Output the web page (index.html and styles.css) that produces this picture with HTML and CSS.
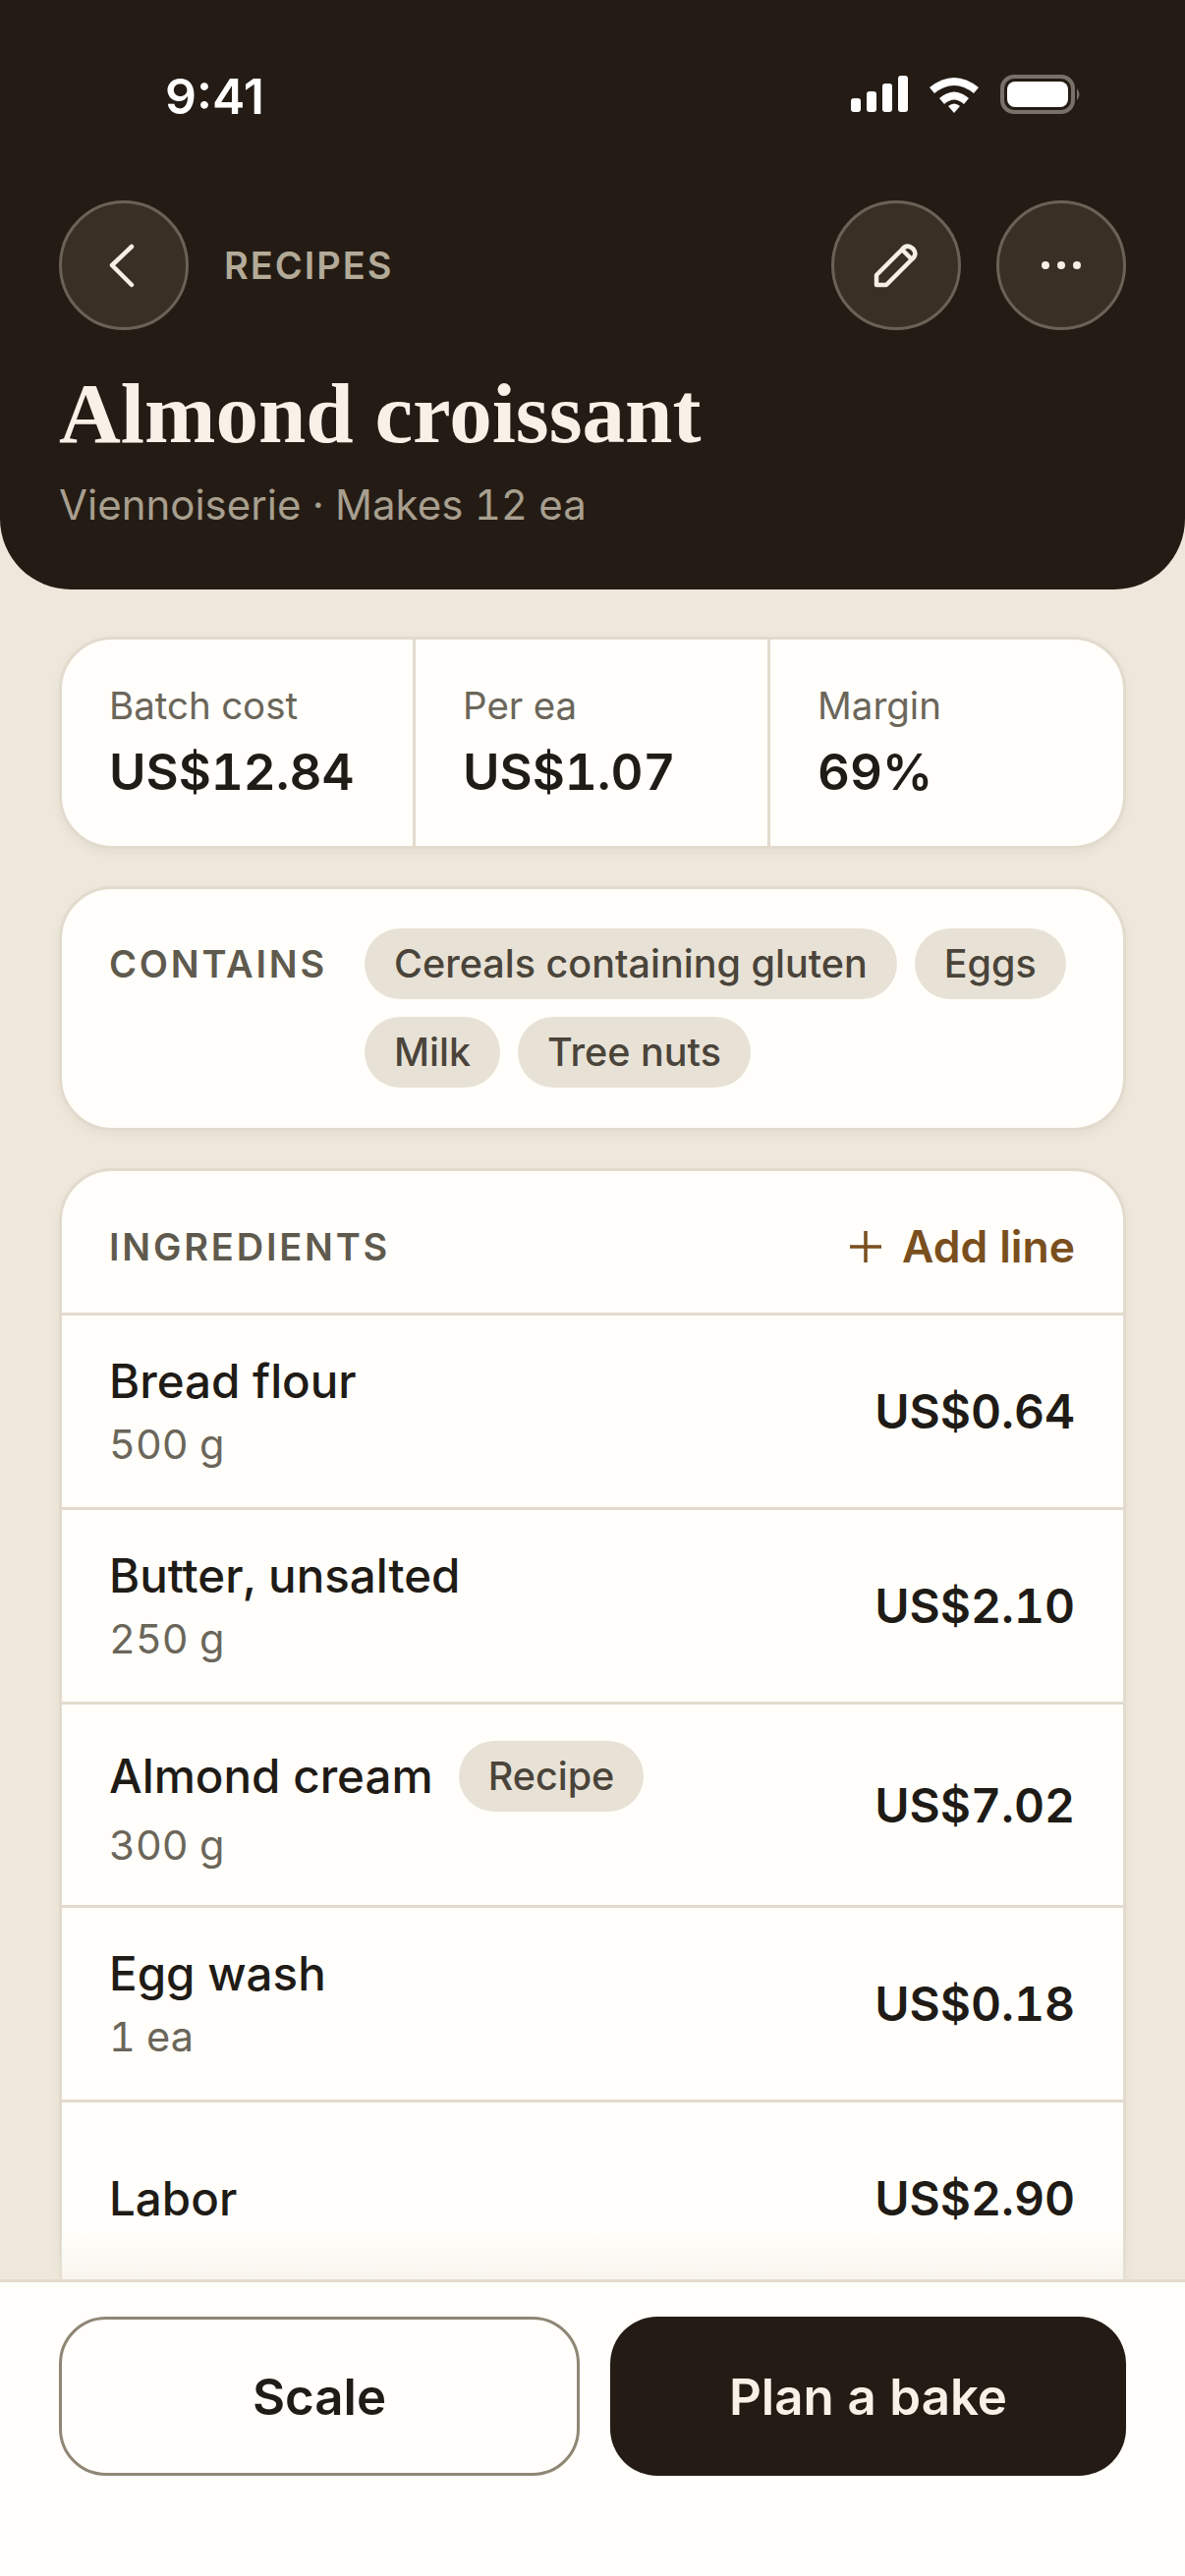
FILE: index.html
```html
<!DOCTYPE html>
<html>

<head>
    <meta charset="UTF-8">
    <meta name="viewport" content="width=device-width, initial-scale=1.0">
    <title>Almond croissant</title>
    <link rel="stylesheet" href="styles.css">
</head>

<body>
    <div class="screen">
        <header class="hero">
            <div class="status-bar">
                <span class="clock">9:41</span>
                <svg class="status-icons" width="236" height="40" viewBox="0 0 236 40">
                    <rect x="1" y="24" width="10" height="14" rx="3" fill="#fff" />
                    <rect x="17" y="17" width="10" height="21" rx="3" fill="#fff" />
                    <rect x="33" y="9" width="10" height="29" rx="3" fill="#fff" />
                    <rect x="49" y="1" width="10" height="37" rx="3" fill="#fff" />
                    <path d="M81 13 Q106 -7 131 13 L126 19 Q106 3 86 19 Z" fill="#fff" />
                    <path d="M91 24 Q106 11 121 24 L116 30 Q106 21 96 30 Z" fill="#fff" />
                    <path d="M100 32 Q106 27 112 32 L106 39 Z" fill="#fff" />
                    <rect x="155" y="2" width="72" height="36" rx="12" fill="none" stroke="#77716a" stroke-width="4" />
                    <rect x="160" y="7" width="62" height="26" rx="8" fill="#fff" />
                    <path d="M231 14 Q236 20 231 26 Z" fill="#77716a" />
                </svg>
            </div>

            <div class="nav-row">
                <button class="round-btn">
                    <svg width="48" height="48" viewBox="0 0 48 48" fill="none" stroke="#f5efe6" stroke-width="4.5" stroke-linecap="round" stroke-linejoin="round">
                        <path d="M32 5 L12 24 L32 44" />
                    </svg>
                </button>
                <span class="crumb">RECIPES</span>
                <button class="round-btn push-right">
                    <svg width="48" height="48" viewBox="0 0 48 48" fill="none" stroke="#f5efe6" stroke-width="4.5" stroke-linejoin="round">
                        <path d="M4 44 V34 L30 8 Q35 2 41 7 Q46 13 40 18 L14 44 Z" />
                        <path d="M30 8 L40 18" />
                    </svg>
                </button>
                <button class="round-btn">
                    <svg width="48" height="48" viewBox="0 0 48 48" fill="#f5efe6">
                        <circle cx="8" cy="24" r="4" />
                        <circle cx="24" cy="24" r="4" />
                        <circle cx="40" cy="24" r="4" />
                    </svg>
                </button>
            </div>

            <h1 class="title">Almond croissant</h1>
            <p class="subtitle">Viennoiserie · Makes 12 ea</p>
        </header>

        <main class="content">
            <section class="card stats">
                <div class="stat">
                    <span class="stat-label">Batch cost</span>
                    <span class="stat-value">US$12.84</span>
                </div>
                <div class="stat">
                    <span class="stat-label">Per ea</span>
                    <span class="stat-value">US$1.07</span>
                </div>
                <div class="stat">
                    <span class="stat-label">Margin</span>
                    <span class="stat-value">69%</span>
                </div>
            </section>

            <section class="card contains">
                <span class="section-label contains-label">CONTAINS</span>
                <div class="chips">
                    <span class="chip">Cereals containing gluten</span>
                    <span class="chip">Eggs</span>
                    <span class="chip">Milk</span>
                    <span class="chip">Tree nuts</span>
                </div>
            </section>

            <section class="card ingredients">
                <div class="ingredients-head">
                    <span class="section-label">INGREDIENTS</span>
                    <span class="add-line">
                        <svg width="32" height="32" viewBox="0 0 32 32" stroke="#7a4f1e" stroke-width="3.5">
                            <path d="M16 0 V32 M0 16 H32" />
                        </svg>
                        Add line
                    </span>
                </div>

                <div class="row">
                    <div>
                        <div class="row-name">Bread flour</div>
                        <div class="row-qty">500 g</div>
                    </div>
                    <span class="row-price">US$0.64</span>
                </div>
                <div class="row">
                    <div>
                        <div class="row-name">Butter, unsalted</div>
                        <div class="row-qty">250 g</div>
                    </div>
                    <span class="row-price">US$2.10</span>
                </div>
                <div class="row row-tall">
                    <div>
                        <div class="row-name">Almond cream <span class="chip chip-inline">Recipe</span></div>
                        <div class="row-qty">300 g</div>
                    </div>
                    <span class="row-price">US$7.02</span>
                </div>
                <div class="row">
                    <div>
                        <div class="row-name">Egg wash</div>
                        <div class="row-qty">1 ea</div>
                    </div>
                    <span class="row-price">US$0.18</span>
                </div>
                <div class="row">
                    <div class="row-name">Labor</div>
                    <span class="row-price">US$2.90</span>
                </div>
            </section>
            <div class="fade"></div>
        </main>

        <footer class="actions">
            <button class="action action-light">Scale</button>
            <button class="action action-dark">Plan a bake</button>
        </footer>
    </div>
</body>

</html>
```

FILE: styles.css
```css
* {
    margin: 0;
    padding: 0;
    box-sizing: border-box;
    font-family: Inter, "Liberation Sans", sans-serif;
    font-variant-numeric: tabular-nums;
}

html,
body {
    width: 1206px;
    height: 2622px;
    overflow: hidden;
    background-color: #eee8dc;
}

.screen {
    height: 2622px;
    display: flex;
    flex-direction: column;
}

/* Dark top block */
.hero {
    height: 600px;
    flex-shrink: 0;
    padding: 0 60px;
    background-color: #241c14;
    border-radius: 0 0 72px 72px;
    position: relative;
    z-index: 2;
}

.status-bar {
    height: 204px;
    padding: 76px 0 0 108px;
    display: flex;
    justify-content: space-between;
    align-items: flex-start;
}

.clock {
    font-size: 50px;
    line-height: 44px;
    font-weight: 600;
    font-variant-numeric: normal;
    color: #fff;
}

.status-icons {
    margin-right: 45px;
}

.nav-row {
    display: flex;
    align-items: center;
    gap: 36px;
}

.round-btn {
    width: 132px;
    height: 132px;
    border-radius: 50%;
    background-color: #3a2f25;
    border: 3px solid #6b6257;
    display: flex;
    align-items: center;
    justify-content: center;
    flex-shrink: 0;
}

.push-right {
    margin-left: auto;
}

.crumb {
    font-size: 38px;
    font-weight: 600;
    letter-spacing: 2px;
    color: #b3aa98;
}

.title {
    margin-top: 37px;
    font-family: "Liberation Serif", serif;
    font-size: 87px;
    line-height: 96px;
    font-weight: 700;
    color: #f7f1e8;
}

.subtitle {
    margin-top: 20px;
    font-size: 42px;
    line-height: 50px;
    color: #a89f8f;
}

/* Scrolling part */
.content {
    flex: 1;
    min-height: 0;
    overflow: hidden;
    padding: 48px 60px 0;
    display: flex;
    flex-direction: column;
    gap: 38px;
    position: relative;
}

.card {
    flex-shrink: 0;
    background-color: #fffefa;
    border: 3px solid #e2dbcd;
    border-radius: 54px;
    box-shadow: 0 4px 10px rgba(90, 70, 40, 0.06);
}

.stats {
    height: 216px;
    display: grid;
    grid-template-columns: 360px 361px 1fr;
    overflow: hidden;
}

.stat {
    padding: 44px 0 0 48px;
    border-right: 3px solid #e2dbcd;
    display: flex;
    flex-direction: column;
    gap: 14px;
}

.stat:last-child {
    border-right: none;
}

.stat-label {
    font-size: 38.5px;
    line-height: 46px;
    color: #6b665a;
}

.stat-value {
    font-size: 51px;
    line-height: 62px;
    font-weight: 600;
    color: #1f1b16;
}

.contains {
    height: 249px;
    padding: 40px 48px 0;
    display: flex;
    gap: 38px;
}

.section-label {
    font-size: 38px;
    font-weight: 600;
    letter-spacing: 2.8px;
    color: #5f5a4e;
}

.contains-label {
    line-height: 72px;
    flex-shrink: 0;
}

.chips {
    display: flex;
    flex-wrap: wrap;
    align-content: flex-start;
    gap: 18px;
}

.chip {
    height: 72px;
    padding: 0 30px;
    display: inline-flex;
    align-items: center;
    font-size: 39.5px;
    font-weight: 500;
    color: #4a443a;
    background-color: #e8e2d6;
    border-radius: 36px;
}

.ingredients {
    padding-bottom: 80px;
}

.ingredients-head {
    height: 144px;
    padding: 10px 49px 0 48px;
    display: flex;
    align-items: center;
    justify-content: space-between;
}

.add-line {
    display: flex;
    align-items: center;
    gap: 21px;
    font-size: 44.5px;
    font-weight: 600;
    color: #7a4f1e;
}

.row {
    height: 198px;
    padding: 0 49px 0 48px;
    border-top: 3px solid #e2dbcd;
    display: flex;
    align-items: center;
    justify-content: space-between;
}

.row-tall {
    height: 207px;
}

.row-name {
    font-size: 47.5px;
    line-height: 54px;
    font-weight: 500;
    color: #1f1b16;
    display: flex;
    align-items: center;
    gap: 26px;
}

.row-qty {
    margin-top: 13px;
    font-size: 41.5px;
    line-height: 48px;
    color: #6b665a;
}

.row-tall .row-qty {
    margin-top: 10px;
}

.row-price {
    font-size: 48px;
    font-weight: 600;
    color: #1f1b16;
}

.fade {
    position: absolute;
    left: 0;
    right: 0;
    bottom: 0;
    height: 50px;
    background: linear-gradient(to bottom, rgba(238, 232, 220, 0), rgba(238, 232, 220, 0.4));
}

/* Bottom buttons */
.actions {
    height: 302px;
    flex-shrink: 0;
    padding: 35px 60px 0;
    display: flex;
    gap: 31px;
    align-items: flex-start;
    background-color: #fffefa;
    border-top: 3px solid #e2dbcd;
    position: relative;
}

.action {
    height: 162px;
    border-radius: 48px;
    font-size: 51px;
    font-weight: 600;
}

.action-light {
    width: 530px;
    background-color: #fffefa;
    border: 3px solid #8f8676;
    color: #1f1b16;
}

.action-dark {
    flex: 1;
    background-color: #241c14;
    border: none;
    color: #f7f1e8;
}
```
